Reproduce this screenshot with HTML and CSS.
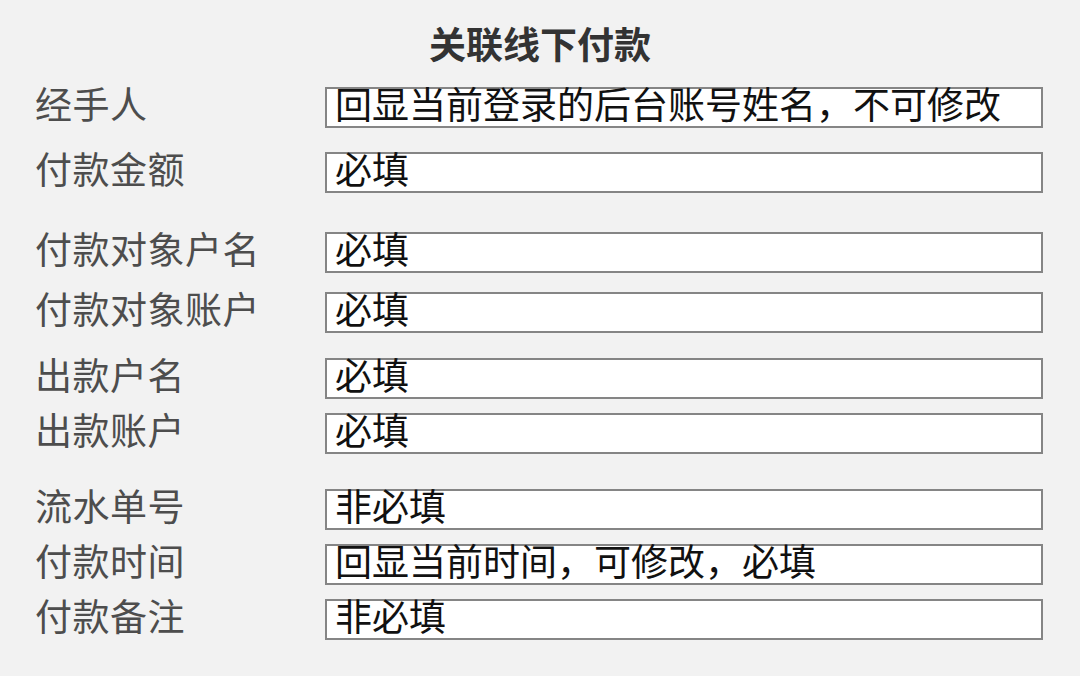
FILE: index.html
```html
<!DOCTYPE html>
<html lang="zh-CN">
<head>
    <meta charset="UTF-8">
    <meta name="viewport" content="width=device-width, initial-scale=1.0">
    <title>关联线下付款</title>
    <link rel="stylesheet" href="styles.css">
</head>
<body>
    <div class="panel">
        <h1 class="title">关联线下付款</h1>

        <div class="group">
            <div class="row">
                <span class="label">经手人</span>
                <div class="field">回显当前登录的后台账号姓名，不可修改</div>
            </div>
            <div class="row">
                <span class="label">付款金额</span>
                <div class="field">必填</div>
            </div>
        </div>

        <div class="group group-payee">
            <div class="row">
                <span class="label">付款对象户名</span>
                <div class="field">必填</div>
            </div>
            <div class="row">
                <span class="label">付款对象账户</span>
                <div class="field">必填</div>
            </div>
        </div>

        <div class="group group-payer">
            <div class="row">
                <span class="label">出款户名</span>
                <div class="field">必填</div>
            </div>
            <div class="row">
                <span class="label">出款账户</span>
                <div class="field">必填</div>
            </div>
        </div>

        <div class="group group-extra">
            <div class="row">
                <span class="label">流水单号</span>
                <div class="field">非必填</div>
            </div>
            <div class="row">
                <span class="label">付款时间</span>
                <div class="field">回显当前时间，可修改，必填</div>
            </div>
            <div class="row">
                <span class="label">付款备注</span>
                <div class="field">非必填</div>
            </div>
        </div>
    </div>
</body>
</html>
```

FILE: styles.css
```css
body {
    margin: 0;
    background: #f2f2f2;
    font-family: "Noto Sans CJK SC", "Noto Sans", sans-serif;
}

.panel {
    width: 1080px;
    height: 676px;
    padding: 23px 0 0 35px;
    box-sizing: border-box;
}

.title {
    margin: 0 0 24px 0;
    padding-right: 35px;
    text-align: center;
    font-size: 37px;
    line-height: 40px;
    font-weight: bold;
    color: #333;
}

.group {
    display: flex;
    flex-direction: column;
    gap: 24px;
}

.group-payee {
    margin-top: 39px;
    gap: 19px;
}

.group-payer {
    margin-top: 25px;
    gap: 14px;
}

.group-extra {
    margin-top: 35px;
    gap: 14px;
}

.row {
    display: grid;
    grid-template-columns: 290px 718px;
    align-items: start;
}

.label {
    font-size: 37px;
    line-height: 33px;
    letter-spacing: 0.5px;
    color: #4d4d4d;
    white-space: nowrap;
}

.field {
    height: 41px;
    box-sizing: border-box;
    border: 2px solid #858585;
    background: #fff;
    padding-left: 8px;
    font-size: 37px;
    line-height: 28px;
    color: #111;
    white-space: nowrap;
}
```
